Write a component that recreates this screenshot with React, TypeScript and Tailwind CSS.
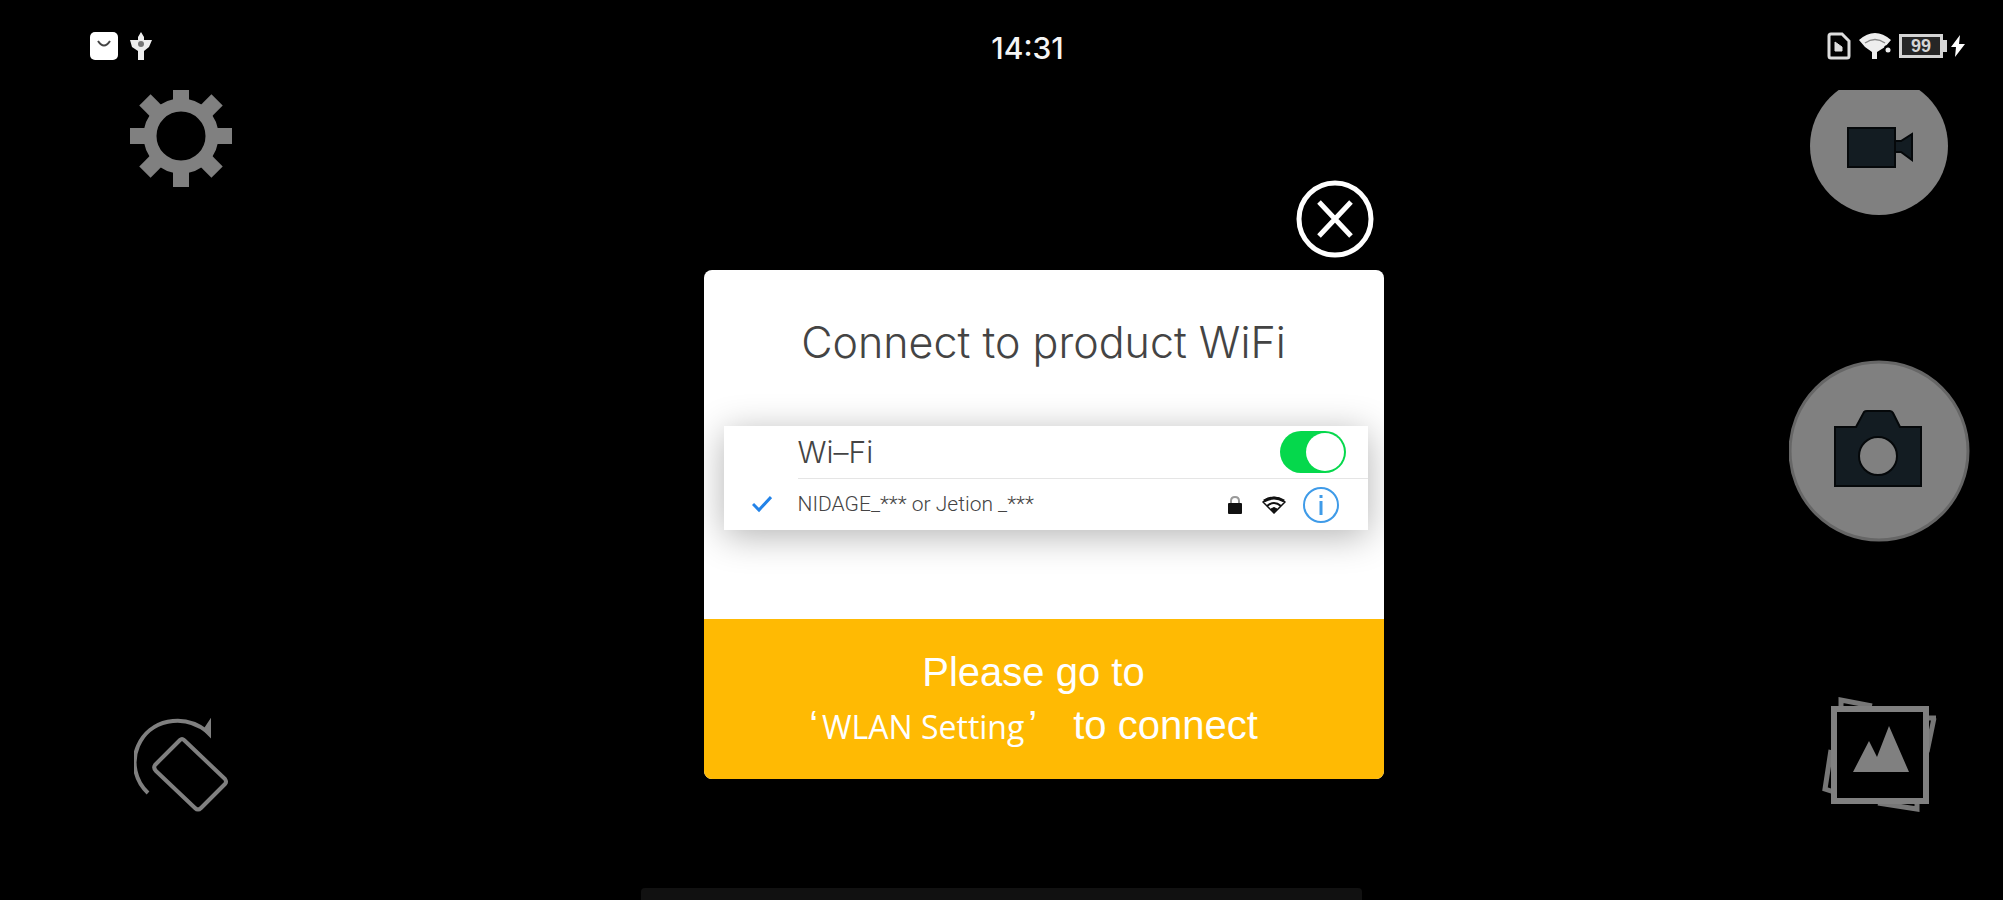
import { FC, useState } from 'react';

const GearIcon: FC = () => (
  <svg viewBox="0 0 104 98" className="w-[104px] h-[98px]" fill="#808080">
    <g transform="translate(51 46)">
      {[0, 45, 90, 135, 180, 225, 270, 315].map((angle) => (
        <rect key={angle} x="-8" y="-51" width="16" height="20" transform={`rotate(${angle})`} />
      ))}
      <circle r="31" fill="none" stroke="#808080" strokeWidth="13" />
    </g>
  </svg>
);

const RotateIcon: FC = () => (
  <svg
    viewBox="0 0 96 94"
    className="w-[96px] h-[94px]"
    fill="none"
    stroke="#808080"
    strokeWidth="4"
    strokeLinejoin="round"
  >
    <path d="M14 75 C1 63 -3 44 4 28 C15 2 49 -6 74 14" />
    <path d="M76 3 V18 L70 12 Z" fill="#808080" strokeWidth="2" strokeLinejoin="miter" />
    <path d="M50 22 L91 61 Q93 64 91 66 L67 90 Q64 93 61 90 L22 53 Q19 50 21 47 L46 22 Q48 20 50 22 Z" />
  </svg>
);

const VideoIcon: FC = () => (
  <svg viewBox="0 0 140 126" className="w-[140px] h-[126px]">
    <circle cx="69" cy="56" r="69" fill="#808080" />
    <path d="M37 37 H85 V51 H91 L103 43 V71 L91 62 H85 V78 H37 Z" fill="#131c22" />
    <path d="M85 51 H91 L102 44 V70 L91 62 H85" fill="none" stroke="#05080a" strokeWidth="2" />
    <rect x="38" y="38" width="47" height="39" fill="none" stroke="#05080a" strokeWidth="2" />
  </svg>
);

const CameraIcon: FC = () => (
  <svg viewBox="0 0 182 182" className="w-[182px] h-[182px]">
    <circle cx="90" cy="91" r="89" fill="#808080" stroke="#666" strokeWidth="3" />
    <path
      d="M46 67 H67 L75 52 Q76 51 78 51 H101 Q103 51 104 53 L111 67 H132 V126 H46 Z"
      fill="#131c22"
      stroke="#05080a"
      strokeWidth="2"
    />
    <circle cx="89" cy="96" r="19" fill="#808080" stroke="#05080a" strokeWidth="2" />
  </svg>
);

const GalleryIcon: FC = () => (
  <svg viewBox="0 0 116 116" className="w-[116px] h-[116px]">
    <g fill="none" stroke="#777" strokeWidth="5">
      <path d="M19 11 V4 L50 10 M112 22 L105 56 M104 22 H114" />
      <path d="M9 54 L3 93 L12 96 M56 107 L95 113 V105" />
    </g>
    <rect x="12" y="13" width="92" height="92" fill="#000" stroke="#808080" strokeWidth="6" />
    <path d="M31 76 L47 45 L55 61 L67 30 L87 76 Z" fill="#808080" />
  </svg>
);

const StatusBar: FC = () => (
  <header className="flex h-[90px] items-start pt-8 pl-[90px] pr-[38px]">
    <div className="flex w-[138px] items-center gap-3">
      <svg viewBox="0 0 28 28" className="size-7">
        <rect width="28" height="28" rx="5" fill="#fff" />
        <path d="M8 9 Q14 18 20 9" fill="none" stroke="#444" strokeWidth="2" />
      </svg>
      <svg viewBox="0 0 22 28" className="w-[22px] h-7" fill="#eee">
        <path d="M8 5 L11 0 L14 5 V8 H22 L19 15 L14 19 V28 H8 V19 L2 15 L0 8 H8 Z" />
        <circle cx="11" cy="12" r="3" fill="#777" />
      </svg>
    </div>
    <time className="flex-1 text-center font-['Inter',sans-serif] text-[30px] leading-8 font-medium text-neutral-100">
      14:31
    </time>
    <div className="flex items-center gap-2">
      <svg viewBox="0 0 24 28" className="w-6 h-7" fill="none" stroke="#ddd" strokeWidth="3">
        <path d="M4 2 H15 L22 9 V24 Q22 26 20 26 H4 Q2 26 2 24 V4 Q2 2 4 2 Z" />
        <path d="M8 10 L15 15 V19 H8 Z" fill="#ddd" strokeWidth="1" />
      </svg>
      <svg viewBox="0 0 32 28" className="w-8 h-7" fill="#eee">
        <path d="M0 8 Q16 -6 32 8 L26 15 L18 20 V27 H13 V20 L6 15 Z" />
        <path d="M6 11 Q16 4 26 11" fill="none" stroke="#888" strokeWidth="1.5" />
        <path d="M26 14 L31 20" stroke="#000" strokeWidth="3" />
        <circle cx="29" cy="18" r="2.5" />
      </svg>
      <div className="flex items-center">
        <span className="flex h-6 w-11 items-center justify-center border-3 border-neutral-300 bg-neutral-800 text-lg leading-4 font-bold text-neutral-300">
          99
        </span>
        <span className="h-3 w-1 bg-neutral-300" />
        <svg viewBox="0 0 14 22" className="ml-1 w-[14px] h-[22px]" fill="#fff">
          <path d="M9 0 L0 12 H5 L4 22 L14 9 H8 Z" />
        </svg>
      </div>
    </div>
  </header>
);

interface ConnectDialogProps {
  onClose: () => void;
}

const ConnectDialog: FC<ConnectDialogProps> = ({ onClose }) => {
  const [enabled, setEnabled] = useState(true);

  return (
    <div className="flex w-full max-w-[680px] flex-col">
      <button type="button" aria-label="Close" onClick={onClose} className="mr-2.5 mb-3 self-end">
        <svg viewBox="0 0 78 78" className="size-[78px]" fill="none" stroke="#fff" strokeWidth="5">
          <circle cx="39" cy="39" r="36" />
          <path d="M23 22 L55 56 M55 22 L23 56" />
        </svg>
      </button>

      <div role="dialog" aria-labelledby="connect-title" className="overflow-hidden rounded-lg bg-white">
        <h1
          id="connect-title"
          className="pt-[47px] text-center font-['Inter',sans-serif] text-[43px] leading-[50px] font-light text-[#444]"
        >
          Connect to product WiFi
        </h1>

        <div className="ml-5 mr-4 mt-[59px] mb-[89px] bg-white pl-7 text-[#444] shadow-[0_6px_36px_rgba(0,0,0,0.3)]">
          <div className="flex h-[52px] items-center pl-[46px] pr-[22px]">
            <label htmlFor="wifi" className="flex-1 font-['Inter',sans-serif] text-[30px] font-light">
              Wi–Fi
            </label>
            <input
              id="wifi"
              type="checkbox"
              role="switch"
              checked={enabled}
              onChange={(e) => setEnabled(e.target.checked)}
              className="flex h-[42px] w-[66px] appearance-none items-center rounded-full bg-neutral-300 p-0.5 before:size-[38px] before:rounded-full before:bg-white checked:justify-end checked:bg-[#05d84c]"
            />
          </div>
          <div className="flex h-[52px] items-center">
            <svg viewBox="0 0 20 18" className="w-5 h-[18px]" fill="none" stroke="#2383e8" strokeWidth="3">
              <path d="M1 9 L7 15 L19 2" />
            </svg>
            <div className="ml-[26px] flex h-full flex-1 items-center border-t border-neutral-200 pr-7">
              <span className="flex-1 font-['Roboto',sans-serif] text-[21px] font-light">
                NIDAGE_*** or Jetion _***
              </span>
              <svg viewBox="0 0 14 18" className="mr-5 w-[14px] h-[18px]">
                <path d="M3 8 V5 Q3 1 7 1 Q11 1 11 5 V8" fill="none" stroke="#999" strokeWidth="2" />
                <rect y="7" width="14" height="11" rx="1" fill="#111" />
              </svg>
              <svg viewBox="0 0 24 18" className="mr-4 w-6 h-[18px]" fill="none" stroke="#111" strokeWidth="2">
                <path d="M1 6 Q12 -3 23 6 L12 17 Z" strokeWidth="1.5" />
                <path d="M2 5 Q12 -1 22 5" strokeWidth="3" />
                <path d="M5 10 Q12 4 19 10" />
                <path d="M9 13 Q12 10 15 13 L12 17 Z" fill="#111" strokeWidth="1" />
              </svg>
              <button type="button" aria-label="Network details">
                <svg viewBox="0 0 38 38" className="size-[38px]" fill="none" stroke="#3f9be8">
                  <circle cx="19" cy="19" r="17" strokeWidth="2" />
                  <path d="M19 9 V12 M19 15 V29" strokeWidth="3" />
                </svg>
              </button>
            </div>
          </div>
        </div>

        <button
          type="button"
          className="block w-full bg-[#ffba03] pt-[27px] pr-5 pb-[26px] text-center text-[40px] leading-[53px] text-white"
        >
          <span className="block">Please go to</span>
          <span className="flex items-baseline justify-center">
            ‘<span className="mx-1 font-['Open_Sans',sans-serif] text-[32px]">WLAN Setting</span>’
            <span className="ml-9">to connect</span>
          </span>
        </button>
      </div>
    </div>
  );
};

export default function App() {
  const [open, setOpen] = useState(true);

  return (
    <div className="flex min-h-screen flex-col bg-black font-['Liberation_Sans',Arial,sans-serif]">
      <StatusBar />

      <main className="flex flex-1 pl-[130px] pr-8">
        <div className="flex w-[168px] flex-col items-start justify-between pb-[76px]">
          <button type="button" aria-label="Settings">
            <GearIcon />
          </button>
          <button type="button" aria-label="Rotate" className="ml-1">
            <RotateIcon />
          </button>
        </div>

        <div className="flex flex-1 justify-center pt-[90px]">
          {open && <ConnectDialog onClose={() => setOpen(false)} />}
        </div>

        <div className="flex flex-col items-center">
          <button type="button" aria-label="Record video">
            <VideoIcon />
          </button>
          <button type="button" aria-label="Take photo" className="mt-36">
            <CameraIcon />
          </button>
          <button type="button" aria-label="Gallery" className="mt-[154px]">
            <GalleryIcon />
          </button>
        </div>
      </main>

      <footer className="flex justify-center">
        <div className="h-3 w-[36%] rounded-t-sm bg-[#111]" />
      </footer>
    </div>
  );
}
